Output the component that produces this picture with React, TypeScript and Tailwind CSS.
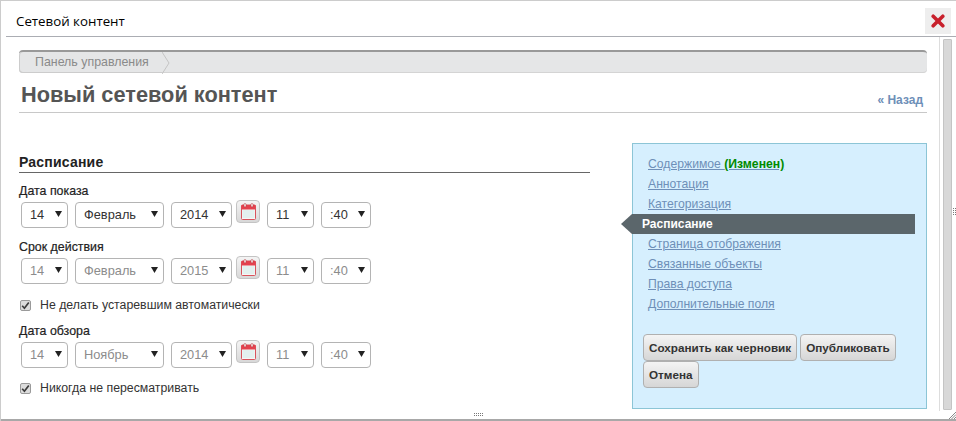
import { ReactNode } from "react";

const FONT = "font-['Liberation_Sans',Arial,sans-serif]";

const SelectBox = ({
  value,
  width,
  disabled,
}: {
  value: string;
  width: string;
  disabled?: boolean;
}) => (
  <div className={`relative h-[26px] ${width}`}>
    <select
      disabled={disabled}
      defaultValue={value}
      className={`h-full w-full appearance-none rounded-[4px] border border-[#b4b4b4] bg-white pl-[8px] text-[12.8px] opacity-100 outline-none ${
        disabled ? "text-[#8c8c8c]" : "text-[#333333]"
      }`}
    >
      <option>{value}</option>
    </select>
    <svg
      className="pointer-events-none absolute right-[6px] top-[9px]"
      width="7"
      height="6"
      viewBox="0 0 7 6"
    >
      <path d="M0 0h7L3.5 6z" fill="#222222" />
    </svg>
  </div>
);

const CalendarButton = () => (
  <button className="mb-[5px] flex h-[23px] w-[24px] items-center justify-center rounded-[4px] border border-[#c4c4c4] bg-gradient-to-b from-[#f4f4f4] to-[#d8d8d8]">
    <svg width="15" height="17" viewBox="0 0 15 17">
      <rect x="0.5" y="2" width="14" height="14.5" rx="1" fill="#f6f6f6" stroke="#d8545c" />
      <rect x="0.5" y="2" width="14" height="4.5" fill="#e4424e" />
      <rect x="1.5" y="7" width="12" height="8" fill="#e3f1ef" />
      <rect x="3" y="0.5" width="2" height="3.5" rx="1" fill="#fff" stroke="#b33a42" strokeWidth="0.6" />
      <rect x="10" y="0.5" width="2" height="3.5" rx="1" fill="#fff" stroke="#b33a42" strokeWidth="0.6" />
    </svg>
  </button>
);

const DateRow = ({
  label,
  day,
  month,
  year,
  disabled,
}: {
  label: string;
  day: string;
  month: string;
  year: string;
  disabled?: boolean;
}) => (
  <div>
    <div className="h-[16px] text-[12.4px] leading-[14px] text-[#222222] [-webkit-text-stroke:0.2px_#222222]">
      {label}
    </div>
    <div className="ml-[2px] flex items-end">
      <SelectBox value={day} width="w-[47px]" disabled={disabled} />
      <div className="w-[7px]" />
      <SelectBox value={month} width="w-[89px]" disabled={disabled} />
      <div className="w-[7px]" />
      <SelectBox value={year} width="w-[61px]" disabled={disabled} />
      <div className="w-[4px]" />
      <CalendarButton />
      <div className="w-[7px]" />
      <SelectBox value="11" width="w-[47px]" disabled={disabled} />
      <div className="w-[7px]" />
      <SelectBox value=":40" width="w-[50px]" disabled={disabled} />
    </div>
  </div>
);

const CheckRow = ({ children }: { children: ReactNode }) => (
  <div className="flex h-[20px] items-center text-[12.3px] text-[#333333]">
    <span className="ml-[1px] flex h-[11px] w-[11px] items-center justify-center rounded-[2px] border border-[#9a9a9a] bg-[#dcdcdc]">
      <svg width="9" height="9" viewBox="0 0 9 9">
        <path d="M1.2 4.8 3.4 7.2 7.8 1.4" fill="none" stroke="#3c3c3c" strokeWidth="1.7" />
      </svg>
    </span>
    <span className="ml-[9px]">{children}</span>
  </div>
);

const NavLink = ({ children }: { children: ReactNode }) => (
  <a className="block h-[20px] pl-[15px] text-[12.2px] leading-[20px] text-[#6e8fb8] underline">
    {children}
  </a>
);

const ActionButton = ({ children }: { children: ReactNode }) => (
  <button className="h-[27px] rounded-[4px] border border-[#b0b0b0] bg-gradient-to-b from-[#f4f4f4] to-[#d6d6d6] px-[5px] text-[11.7px] font-bold text-[#333333]">
    {children}
  </button>
);

export default function App() {
  return (
    <div className={`${FONT} relative flex h-[421px] w-[956px] flex-col overflow-hidden border-l border-t border-[#cccccc] bg-white`}>
      {/* title bar */}
      <div className="flex h-[35px] shrink-0 items-center justify-between pl-[15px] pr-[5px]">
        <span className="mt-[6px] font-['Open_Sans',sans-serif] text-[13.3px] text-black">Сетевой контент</span>
        <button className="mt-[5px] flex h-[26px] w-[26px] items-center justify-center bg-[#eeeeee]">
          <svg width="14" height="14" viewBox="0 0 14 14">
            <path d="M2.2 2.2 11.8 11.8M11.8 2.2 2.2 11.8" stroke="#c8202c" strokeWidth="3.6" strokeLinecap="round" />
          </svg>
        </button>
      </div>

      <div className="ml-[5px] flex min-h-0 flex-1 border-t border-[#abadb3]">
        {/* frame content */}
        <div className="w-[933px] min-w-0 pl-[13px] pr-[12px] pt-[13px]">
          <div className="flex h-[23px] w-[908px] rounded-[4px] border-t-2 border-[#999999] bg-[#e5e6e7] shadow-[inset_0_-1px_0_#d4d4d4]">
            <span className="flex w-[143px] items-center rounded-l-[4px] border-b border-l border-[#cccccc] pl-[15px] text-[12.4px] text-[#8a8a8a]">
              Панель управления
            </span>
            <svg width="8" height="22" viewBox="0 0 8 22">
              <path d="M0 0 7 11 0 22" fill="none" stroke="#c4c4c4" />
            </svg>
          </div>

          <div className="flex h-[40px] w-[908px] items-center justify-between border-b border-[#c8c8c8] pl-[2px] pr-[4px]">
            <h1 className="mt-[6px] text-[21.75px] font-bold text-[#555555]">Новый сетевой контент</h1>
            <a className="mt-[14px] text-[12px] font-bold text-[#6e8fb8]">« Назад</a>
          </div>

          <div className="mt-[30px] flex items-start">
            <div className="w-[571px]">
              <div className="flex h-[30px] items-center border-b border-[#666666] pt-[10px]">
                <h2 className="text-[14px] font-bold tracking-[0.2px] text-[#222222]">Расписание</h2>
              </div>
              <div className="mt-[11px] flex flex-col">
                <DateRow label="Дата показа" day="14" month="Февраль" year="2014" />
                <div className="h-[12px]" />
                <DateRow label="Срок действия" day="14" month="Февраль" year="2015" disabled />
                <div className="h-[11px]" />
                <CheckRow>Не делать устаревшим автоматически</CheckRow>
                <div className="h-[9px]" />
                <DateRow label="Дата обзора" day="14" month="Ноябрь" year="2014" disabled />
                <div className="h-[10px]" />
                <CheckRow>Никогда не пересматривать</CheckRow>
              </div>
            </div>

            <aside className="relative ml-[42px] h-[266px] w-[295px] border border-[#8cc5d6] bg-[#d6effe] pt-[10px]">
              <NavLink>
                Содержимое <span className="font-bold text-[#008a00]">(Изменен)</span>
              </NavLink>
              <NavLink>Аннотация</NavLink>
              <NavLink>Категоризация</NavLink>
              <div className="relative -ml-[1px] flex h-[20px] w-[283px] items-center bg-[#5b666b] pl-[10px] text-[12px] font-bold text-white">
                <span className="absolute -left-[11px] top-0 h-0 w-0 border-y-[10px] border-r-[11px] border-y-transparent border-r-[#5b666b]" />
                Расписание
              </div>
              <NavLink>Страница отображения</NavLink>
              <NavLink>Связанные объекты</NavLink>
              <NavLink>Права доступа</NavLink>
              <NavLink>Дополнительные поля</NavLink>
              <div className="ml-[10px] mt-[20px] flex flex-wrap gap-x-[3px]">
                <ActionButton>Сохранить как черновик</ActionButton>
                <ActionButton>Опубликовать</ActionButton>
                <ActionButton>Отмена</ActionButton>
              </div>
            </aside>
          </div>
        </div>

        {/* scrollbar */}
        <div className="mb-[3px] w-[14px] shrink-0 border-l border-[#dddddd] bg-white pl-[3px] pt-[2px]">
          <div className="h-[371px] w-[9px] rounded-[1px] border border-[#c4c4c4] bg-[#d8d8d8]" />
        </div>
      </div>

      {/* window edge and grips */}
      <div className="flex h-[5px] shrink-0 items-start justify-center">
        <svg className="-mt-[1px]" width="10" height="4" viewBox="0 0 10 4">
          <path d="M0 0h1v1H0zM2 0h1v1H2zM4 0h1v1H4zM6 0h1v1H6zM8 0h1v1H8zM0 2h1v1H0zM2 2h1v1H2zM4 2h1v1H4zM6 2h1v1H6zM8 2h1v1H8z" fill="#777777" />
        </svg>
      </div>
      <div className="h-[2px] shrink-0 bg-[#a8a8a8]" />
      <svg className="absolute bottom-[2px] right-0" width="7" height="7" viewBox="0 0 7 7">
        <path d="M7 0 0 7M7 2.5 2.5 7M7 5 5 7" stroke="#888888" />
      </svg>
      <svg className="absolute right-0 top-[207px]" width="3" height="8" viewBox="0 0 3 8">
        <path d="M0 0h1v1H0zM2 0h1v1H2zM0 2h1v1H0zM2 2h1v1H2zM0 4h1v1H0zM2 4h1v1H2zM0 6h1v1H0zM2 6h1v1H2z" fill="#777777" />
      </svg>
    </div>
  );
}
